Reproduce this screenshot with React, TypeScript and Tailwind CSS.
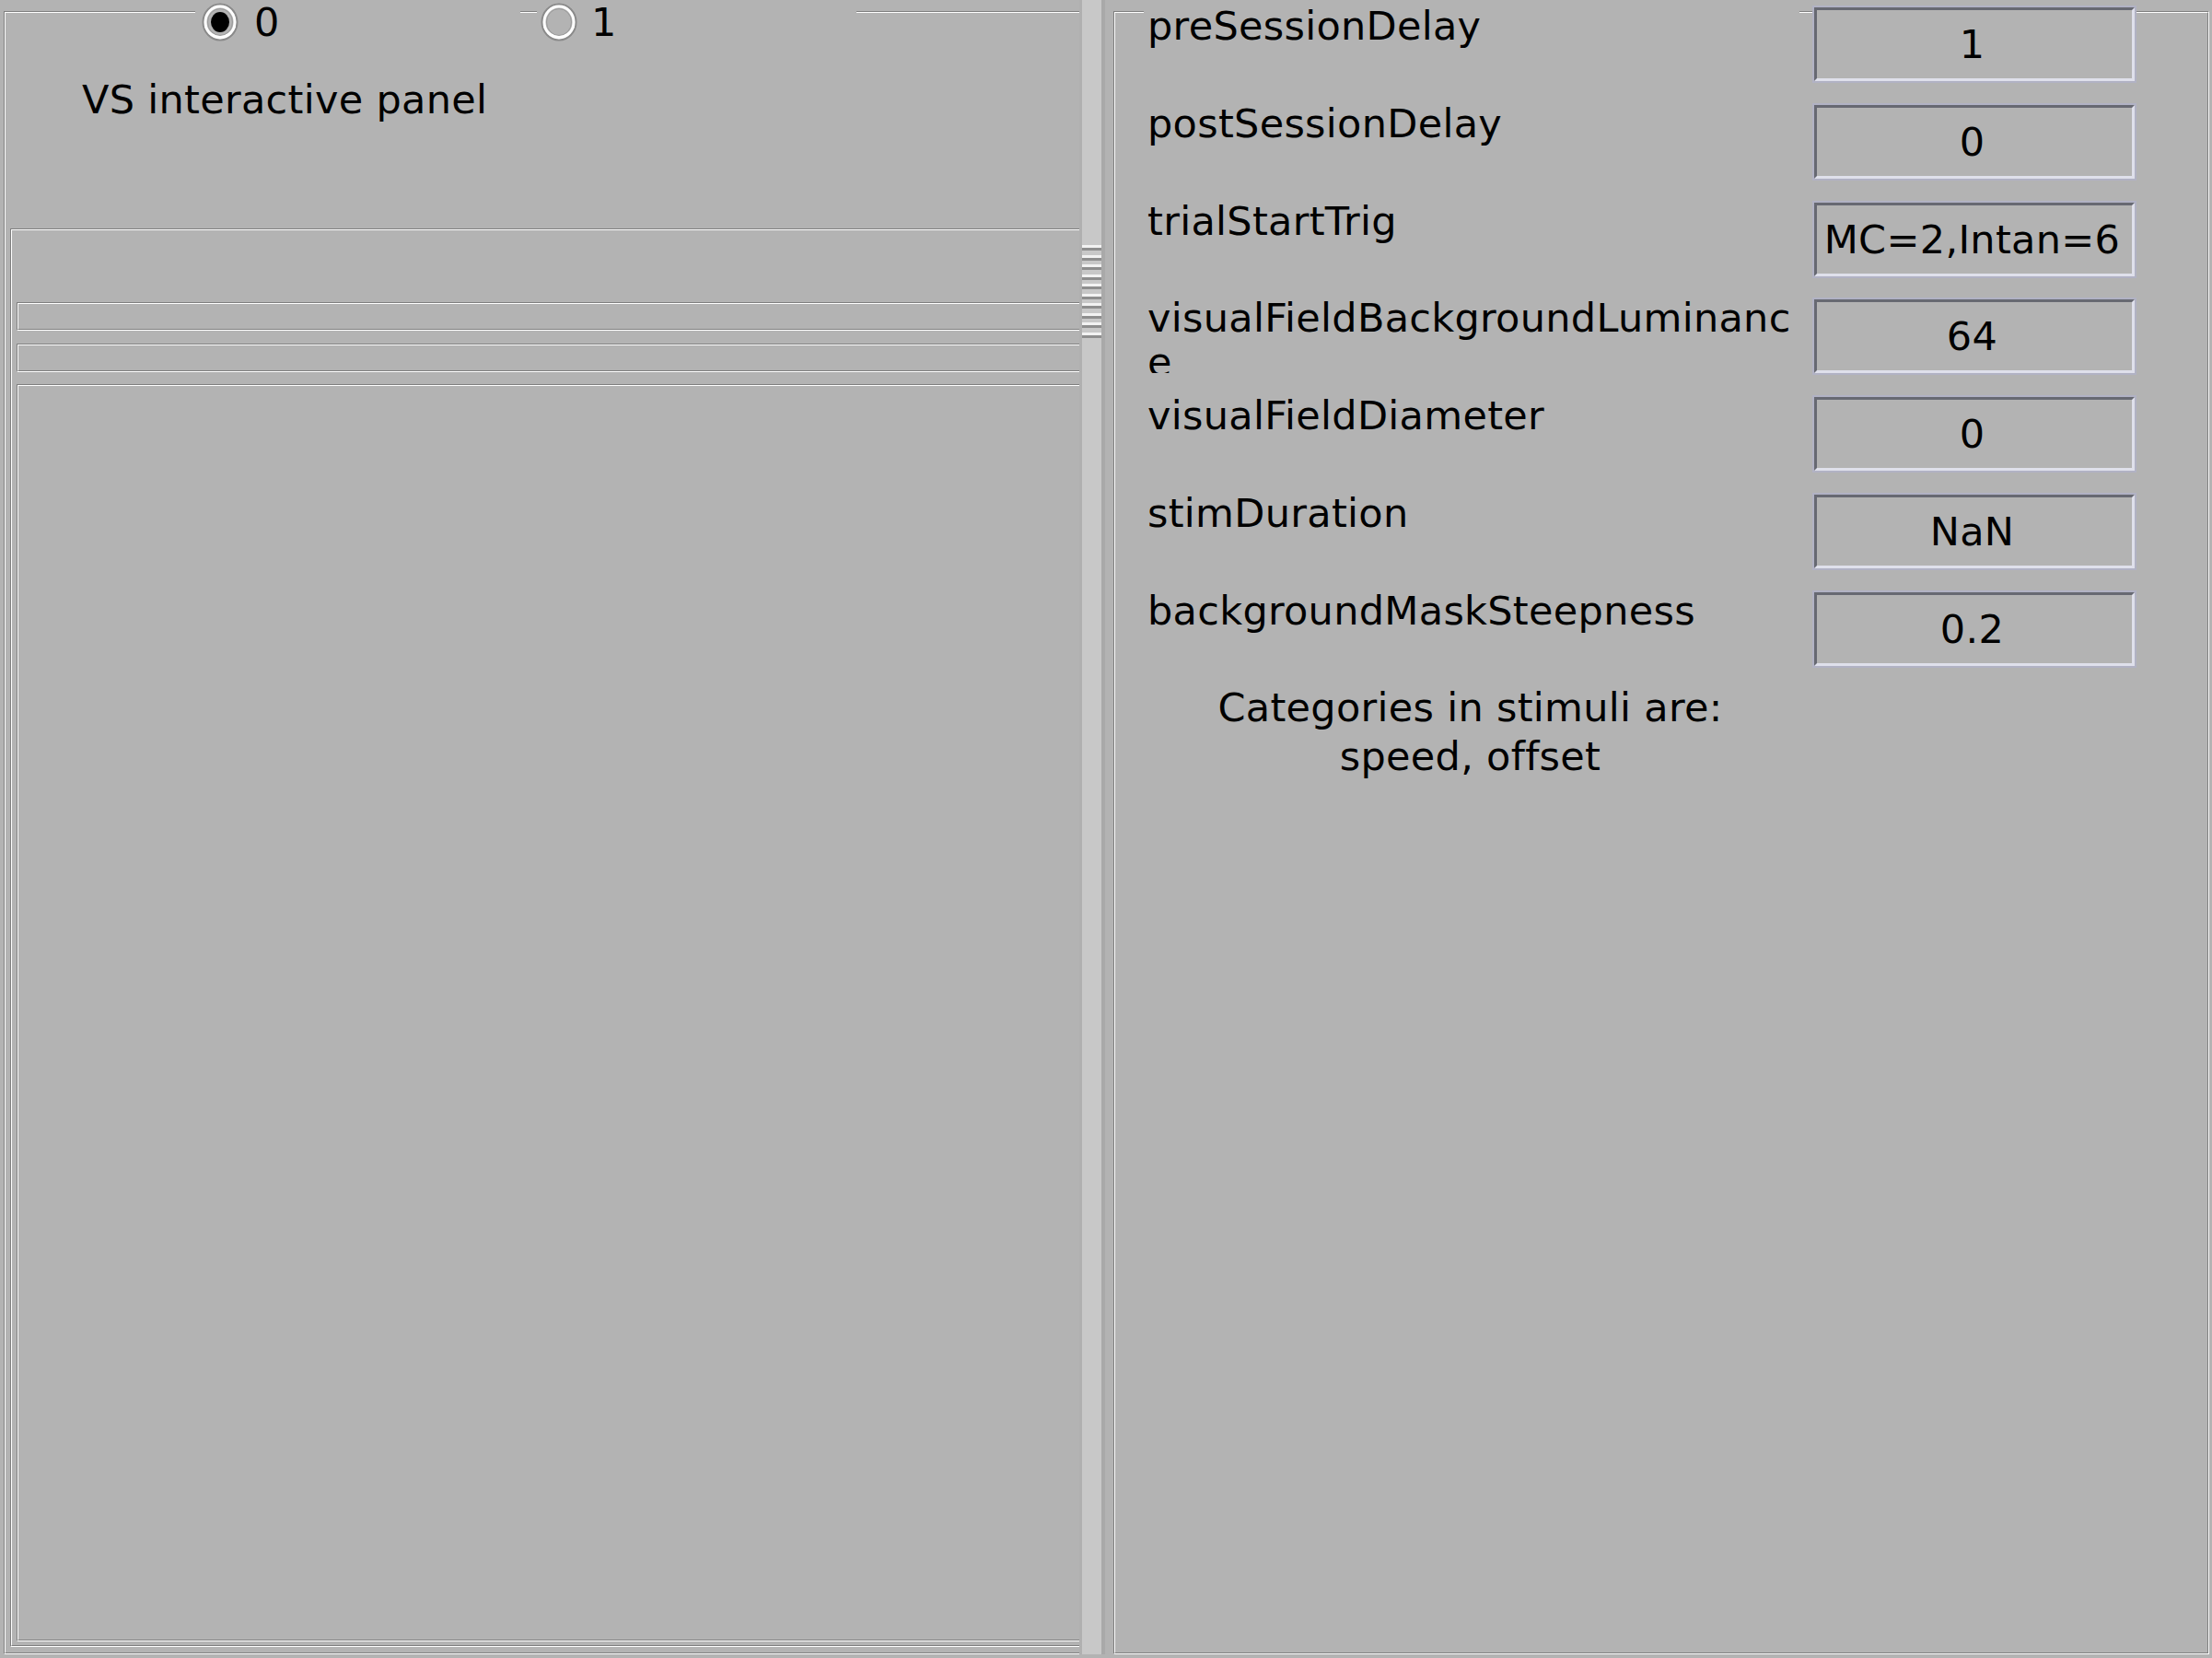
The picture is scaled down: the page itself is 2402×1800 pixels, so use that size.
import React from "react";

const FONT = { fontFamily: '"DejaVu Sans", "Liberation Sans", sans-serif' };

function Etched({
  className,
  innerClassName,
  children,
}: {
  className: string;
  innerClassName?: string;
  children?: React.ReactNode;
}) {
  return (
    <div
      className={`border border-t-[#7f7f7f] border-l-[#7f7f7f] border-r-white border-b-white ${className}`}
    >
      <div
        className={`h-full border border-t-white border-l-white border-r-[#7f7f7f] border-b-[#7f7f7f] ${innerClassName ?? ""}`}
      >
        {children}
      </div>
    </div>
  );
}

function Radio({ checked }: { checked: boolean }) {
  return (
    <svg width="40" height="42" viewBox="0 0 40 42" className="shrink-0">
      <ellipse cx="20" cy="21" rx="18.5" ry="19.5" fill="none" stroke="#8a8a8a" strokeWidth="2" />
      <ellipse cx="20" cy="21" rx="16" ry="17" fill="none" stroke="#ffffff" strokeWidth="3" />
      <path d="M4 26 A18 19 0 0 0 36 26" fill="none" stroke="#ffffff" strokeWidth="2" />
      <ellipse cx="20" cy="21" rx="13.5" ry="14.5" fill="none" stroke="#9a9a9a" strokeWidth="1" />
      {checked && <ellipse cx="20" cy="21" rx="10" ry="11" fill="#000000" />}
    </svg>
  );
}

const rows: [string, string][] = [
  ["preSessionDelay", "1"],
  ["postSessionDelay", "0"],
  ["trialStartTrig", "MC=2,Intan=6"],
  ["visualFieldBackgroundLuminance", "64"],
  ["visualFieldDiameter", "0"],
  ["stimDuration", "NaN"],
  ["backgroundMaskSteepness", "0.2"],
];

export default function App() {
  return (
    <div
      className="w-[2402px] h-[1800px] bg-[#b3b3b3] flex text-black text-[43px] tracking-[0.3px] overflow-hidden"
      style={FONT}
    >
      {/* Left column */}
      <div className="w-[1172px] h-[1800px] overflow-hidden shrink-0">
        <Etched className="ml-[4px] mt-[12px] w-[1190px] h-[1784px]" innerClassName="flex flex-col">
          <div className="relative -mt-[14px] h-[48px] flex shrink-0">
            <div className="ml-[206px] w-[353px] h-[48px] bg-[#b3b3b3] flex items-center pl-[7px] gap-[17px] leading-[46px]">
              <Radio checked />
              <span>0</span>
            </div>
            <div className="ml-[18px] w-[347px] h-[48px] bg-[#b3b3b3] flex items-center pl-[4px] gap-[15px] leading-[46px]">
              <Radio checked={false} />
              <span>1</span>
            </div>
          </div>
          <div className="mt-[35px] ml-[83px] leading-[50px] h-[50px] shrink-0">VS interactive panel</div>
          <Etched className="mt-[115px] ml-[5px] w-[1175px] h-[1540px] shrink-0" innerClassName="flex flex-col">
            <Etched className="mt-[78px] ml-[5px] w-[1165px] h-[31px] shrink-0" />
            <Etched className="mt-[14px] ml-[5px] w-[1165px] h-[31px] shrink-0" />
            <Etched className="mt-[13px] ml-[5px] w-[1165px] h-[1365px] shrink-0" />
          </Etched>
        </Etched>
      </div>

      {/* Split divider */}
      <div className="w-[3px] h-[1796px] bg-[#b0b0b0] shrink-0" />
      <div className="w-[21px] h-[1796px] bg-[#c8c8c8] shrink-0 flex flex-col pt-[266px] gap-[4.5px]">
        {Array.from({ length: 10 }).map((_, i) => (
          <div key={i} className="flex flex-col">
            <div className="h-[3px] bg-[#f2f2f2]" />
            <div className="h-[3px] bg-[#8e8e8e]" />
          </div>
        ))}
      </div>
      <div className="w-[4px] h-[1796px] bg-[#a9a9a9] shrink-0" />
      <div className="w-[9px] shrink-0" />

      {/* Right panel */}
      <Etched className="mt-[12px] w-[1190px] h-[1784px] shrink-0" innerClassName="flex flex-col">
        <div className="-mt-[10px] ml-[31px] flex flex-col gap-[21.83px]">
          {rows.map(([label, value]) => (
            <div key={label} className="flex h-[84px]">
              <div className="w-[712px] h-[84px] pl-[4px] overflow-hidden break-all leading-[48px] bg-[#b3b3b3]">
                {label}
              </div>
              <div className="ml-[14px] mt-[2px] w-[352px] h-[84px] border-2 border-[#b1b2c4] bg-[#b3b3b3]">
                <div className="h-full border-[3px] border-t-[#676972] border-l-[#676972] border-r-[#dfe0eb] border-b-[#dfe0eb] flex items-center justify-center pr-[5px] whitespace-nowrap overflow-hidden leading-[50px]">
                  {value}
                </div>
              </div>
            </div>
          ))}
        </div>
        <div className="mt-[18.6px] ml-[31px] w-[709px] text-center leading-[53px]">
          <div>Categories in stimuli are:</div>
          <div>speed, offset</div>
        </div>
      </Etched>
    </div>
  );
}
